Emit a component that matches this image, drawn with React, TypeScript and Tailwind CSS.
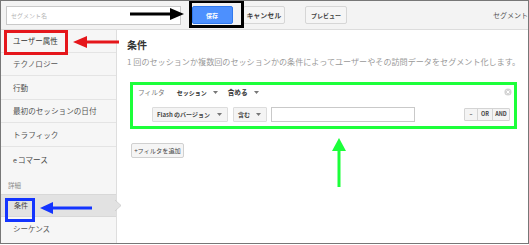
import React from "react";

const items = ["テクノロジー", "行動", "最初のセッションの日付", "トラフィック"];

const Caret = () => (
  <svg width="5" height="3" viewBox="0 0 5 3" className="shrink-0">
    <polygon points="0,0 5,0 2.5,3" fill="#777" />
  </svg>
);

export default function App() {
  return (
    <div className="relative w-[529px] h-[244px] overflow-hidden bg-white border border-[#777] font-['Noto_Sans_CJK_JP',sans-serif] text-[#444]">
      {/* top bar */}
      <div className="flex items-center h-[29px] border-b border-[#dcdcdc] bg-[#f3f3f3] pl-[5px] whitespace-nowrap">
        <div className="w-[180px] h-[19px] bg-white border border-[#c9c9c9] flex items-center pl-[4px] text-[6px] text-[#b5b5b5]">
          セグメント名
        </div>
        <div className="ml-[11px] w-[42px] h-[18px] rounded-[2px] bg-[#4d90fe] border border-[#3079ed] flex items-center justify-center text-[6px] font-bold text-white">
          保存
        </div>
        <div className="ml-[10px] w-[44px] h-[18px] rounded-[2px] bg-[#f5f5f5] border border-[#d6d6d6] flex items-center justify-center text-[7px] font-bold text-[#444]">
          キャンセル
        </div>
        <div className="ml-[20px] w-[43px] h-[18px] rounded-[2px] bg-[#f5f5f5] border border-[#d6d6d6] flex items-center justify-center text-[6px] font-bold text-[#444]">
          プレビュー
        </div>
        <div className="ml-[146px] text-[7px] text-[#555]">セグメント</div>
      </div>

      <div className="flex h-[214px]">
        {/* sidebar */}
        <div className="w-[116px] shrink-0 bg-[#f6f6f6] border-r border-[#dedede] flex flex-col">
          <div className="h-[22.5px] border-b border-[#e4e4e4] flex items-center pl-[12px] text-[7.5px] text-[#333]">
            ユーザー属性
          </div>
          {items.map((t) => (
            <div key={t} className="h-[23.5px] border-b border-[#e4e4e4] flex items-center pl-[12px] text-[7.6px] text-[#555]">
              {t}
            </div>
          ))}
          <div className="h-[24.5px] flex items-center pl-[12px] pt-[2px] text-[7.6px] text-[#444]">
            <span className="text-[7px] mr-[1px]">e</span>コマース
          </div>
          <div className="h-[23px] flex items-end pb-[3px] pl-[7px] text-[6.5px] text-[#8a8a8a]">
            詳細
          </div>
          <div className="relative h-[23px] bg-[#e2e2e2] border-y border-[#d8d8d8] flex items-center pl-[13px] text-[7px] text-[#444]">
            条件
            <svg className="absolute -right-[7px] top-[1px]" width="8" height="19" viewBox="0 0 8 19">
              <polygon points="0,0 0,5 6,9.5 0,14 0,19" fill="#e2e2e2" />
              <polyline points="0,4 6,9.5 0,15" fill="none" stroke="#cfcfcf" strokeWidth="1" />
            </svg>
          </div>
          <div className="h-[23px] flex items-center pl-[12px] text-[7.5px] text-[#555]">
            シーケンス
          </div>
        </div>

        {/* main */}
        <div className="flex-1 pl-[10px] pt-[10px] flex flex-col">
          <div className="text-[10px] leading-[10px] font-bold text-[#333]">条件</div>
          <div className="mt-[8px] text-[8.1px] leading-[8px] text-[#9a9a9a] whitespace-nowrap">
            1 回のセッションか複数回のセッションかの条件によってユーザーやその訪問データをセグメント化します。
          </div>

          <div className="mt-[16px] ml-[3px] w-[387px] h-[47px] border-[3px] border-[#1cff3a] bg-white flex flex-col">
            <div className="relative h-[14px] flex items-center pl-[5px] whitespace-nowrap">
              <span className="text-[6.7px] text-[#777]">フィルタ</span>
              <span className="ml-[12px] text-[6px] font-bold text-[#333]">セッション</span>
              <span className="ml-[6px]"><Caret /></span>
              <span className="ml-[10px] text-[6.7px] font-bold text-[#333]">含める</span>
              <span className="ml-[6px]"><Caret /></span>
              <svg className="absolute right-[2px] top-[3px]" width="8" height="8" viewBox="0 0 8 8">
                <circle cx="4" cy="4" r="3.6" fill="#d4d4d4" />
                <path d="M2.5 2.5 L5.5 5.5 M5.5 2.5 L2.5 5.5" stroke="#fff" strokeWidth="1" />
              </svg>
            </div>
            <div className="mt-[8px] h-[15px] flex items-center pl-[19px] pr-[4px] whitespace-nowrap">
              <div className="w-[76px] h-[15px] bg-[#f4f4f4] border border-[#dcdcdc] rounded-[1px] flex items-center pl-[4px] text-[6px] font-bold text-[#444]">
                <span>Flash のバージョン</span>
                <span className="ml-auto mr-[5px] flex"><Caret /></span>
              </div>
              <div className="ml-[5px] w-[34px] h-[15px] bg-[#f4f4f4] border border-[#dcdcdc] rounded-[1px] flex items-center pl-[4px] text-[6px] font-bold text-[#444]">
                <span>含む</span>
                <span className="ml-auto mr-[5px] flex"><Caret /></span>
              </div>
              <div className="ml-[4px] w-[144px] h-[15px] bg-white border border-[#c9c9c9]" />
              <div className="ml-auto flex h-[13px] border border-[#d4d4d4] rounded-[1px] bg-[#f4f4f4] text-[5.5px] font-bold text-[#444]">
                <div className="w-[13px] flex items-center justify-center border-r border-[#d4d4d4]">–</div>
                <div className="w-[15px] flex items-center justify-center border-r border-[#d4d4d4]">OR</div>
                <div className="w-[16px] flex items-center justify-center">AND</div>
              </div>
            </div>
          </div>

          <div className="mt-[14px] ml-[4px] w-[53px] h-[15px] bg-[#f5f5f5] border border-[#d0d0d0] rounded-[2px] flex items-center justify-center text-[6.2px] text-[#444] whitespace-nowrap">
            +フィルタを追加
          </div>
        </div>
      </div>

      {/* annotations */}
      <div className="absolute left-[188px] top-[-1px] w-[55px] h-[28px] border-[3px] border-black" />
      <div className="absolute left-[3px] top-[29px] w-[64px] h-[25px] border-[3px] border-[#e5161b]" />
      <div className="absolute left-[4px] top-[197px] w-[30px] h-[24px] border-[3px] border-[#1334ff]" />
      <svg className="absolute left-[-1px] top-[-1px] pointer-events-none" width="529" height="245" viewBox="0 0 529 245">
        <line x1="130" y1="14" x2="172" y2="14" stroke="#000" strokeWidth="3" />
        <polygon points="170,8 184,14 170,20" fill="#000" />
        <line x1="85" y1="42" x2="119" y2="42" stroke="#e5161b" strokeWidth="3" />
        <polygon points="73,42 87,36 87,48" fill="#e5161b" />
        <line x1="51" y1="208" x2="92" y2="208" stroke="#1334ff" strokeWidth="3" />
        <polygon points="40,208 53,202 53,214" fill="#1334ff" />
        <line x1="339" y1="149" x2="339" y2="187" stroke="#1cff3a" strokeWidth="3" />
        <polygon points="339,138 332,151 346,151" fill="#1cff3a" />
      </svg>
    </div>
  );
}
